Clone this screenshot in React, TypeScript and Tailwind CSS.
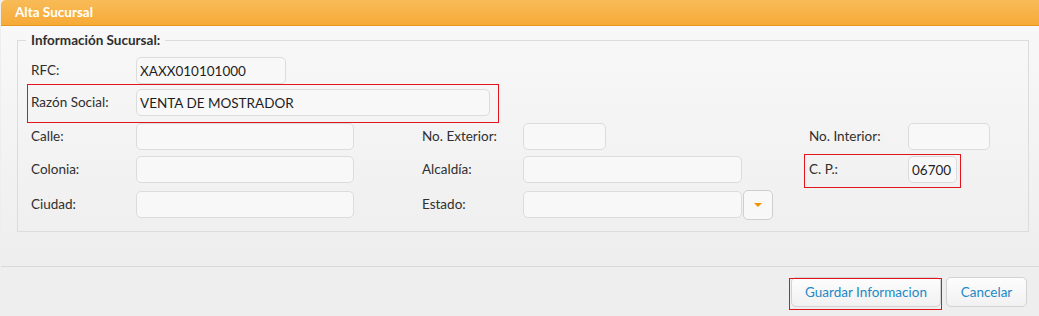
import React from 'react';

const inputCls =
  'h-[27px] rounded-[5px] border border-[#dcdcdc] bg-[#f8f8f8] px-[3px] text-[13.5px] text-[#1e1e1e] outline-none';

function Label({ text, w }: { text: string; w: string }) {
  return <span className={`${w} shrink-0 text-[13.5px] text-[#2f2f2f]`}>{text}</span>;
}

export default function App() {
  return (
    <div className="relative h-[316px] w-[1039px] overflow-hidden bg-[#eeeeee] font-['Lato',sans-serif]">
      {/* Header */}
      <div className="ml-px flex h-[26px] items-center rounded-tl-[5px] border-b border-[#e8951f] bg-gradient-to-b from-[#f8bb57] to-[#f6aa36] pl-[14px] text-[13.5px] font-bold text-white">
        Alta Sucursal
      </div>

      {/* Body */}
      <div className="ml-px border-b border-[#d9d9d9] bg-gradient-to-b from-[#f8f8f8] to-[#eeeeee] pb-[34px] pl-[16px] pr-[10px] pt-[6px]">
        <fieldset className="border border-[#dcdcdc] pb-[13px] pl-[8px]">
          <legend className="px-[5px] text-[13.5px] font-bold leading-[16px] text-[#2f2f2f]">
            Información Sucursal:
          </legend>

          <div className="ml-[5px] flex flex-col">
            <div className="mt-[9px] flex h-[27px] items-center">
              <Label text="RFC:" w="w-[105px]" />
              <input className={`${inputCls} w-[150px]`} defaultValue="XAXX010101000" />
            </div>

            <div className="mt-[5px] flex h-[27px] items-center">
              <Label text="Razón Social:" w="w-[105px]" />
              <input className={`${inputCls} w-[354px]`} defaultValue="VENTA DE MOSTRADOR" />
            </div>

            <div className="mt-[7px] flex h-[27px] items-center">
              <div className="flex w-[391px] items-center">
                <Label text="Calle:" w="w-[105px]" />
                <input className={`${inputCls} w-[218px]`} />
              </div>
              <div className="flex w-[387px] items-center">
                <Label text="No. Exterior:" w="w-[101px]" />
                <input className={`${inputCls} w-[83px]`} />
              </div>
              <div className="flex items-center">
                <Label text="No. Interior:" w="w-[99px]" />
                <input className={`${inputCls} w-[82px]`} />
              </div>
            </div>

            <div className="mt-[6px] flex h-[27px] items-center">
              <div className="flex w-[391px] items-center">
                <Label text="Colonia:" w="w-[105px]" />
                <input className={`${inputCls} w-[218px]`} />
              </div>
              <div className="flex w-[387px] items-center">
                <Label text="Alcaldía:" w="w-[101px]" />
                <input className={`${inputCls} w-[219px]`} />
              </div>
              <div className="flex items-center">
                <Label text="C. P.:" w="w-[99px]" />
                <input className={`${inputCls} w-[49px]`} defaultValue="06700" />
              </div>
            </div>

            <div className="mt-[8px] flex h-[27px] items-center">
              <div className="flex w-[391px] items-center">
                <Label text="Ciudad:" w="w-[105px]" />
                <input className={`${inputCls} w-[218px]`} />
              </div>
              <div className="flex items-center">
                <Label text="Estado:" w="w-[101px]" />
                <input className={`${inputCls} w-[219px]`} />
                <button className="ml-px flex h-[30px] w-[30px] items-center justify-center rounded-[5px] border border-[#cfcfcf] bg-[#f8f8f8]">
                  <svg width="10" height="6" viewBox="0 0 10 6">
                    <path d="M1 1h8L5 5z" fill="#f39200" />
                  </svg>
                </button>
              </div>
            </div>
          </div>
        </fieldset>
      </div>

      {/* Footer */}
      <div className="flex justify-end gap-[5px] pr-[12px] pt-[10px]">
        <button className="h-[30px] w-[150px] rounded-[5px] border border-[#d3d3d3] bg-gradient-to-b from-[#fdfdfd] to-[#f1f1f1] text-[13.5px] text-[#2289c6]">
          Guardar Informacion
        </button>
        <button className="h-[30px] w-[81px] rounded-[5px] border border-[#d3d3d3] bg-gradient-to-b from-[#fdfdfd] to-[#f1f1f1] text-[13.5px] text-[#2289c6]">
          Cancelar
        </button>
      </div>

      {/* annotation boxes */}
      <div className="pointer-events-none absolute left-[27px] top-[84px] h-[39px] w-[472px] border border-[#e3141c]" />
      <div className="pointer-events-none absolute left-[804px] top-[154px] h-[34px] w-[157px] border border-[#e3141c]" />
      <div className="pointer-events-none absolute left-[789px] top-[278px] h-[32px] w-[153px] border border-[#e3141c]" />
    </div>
  );
}
